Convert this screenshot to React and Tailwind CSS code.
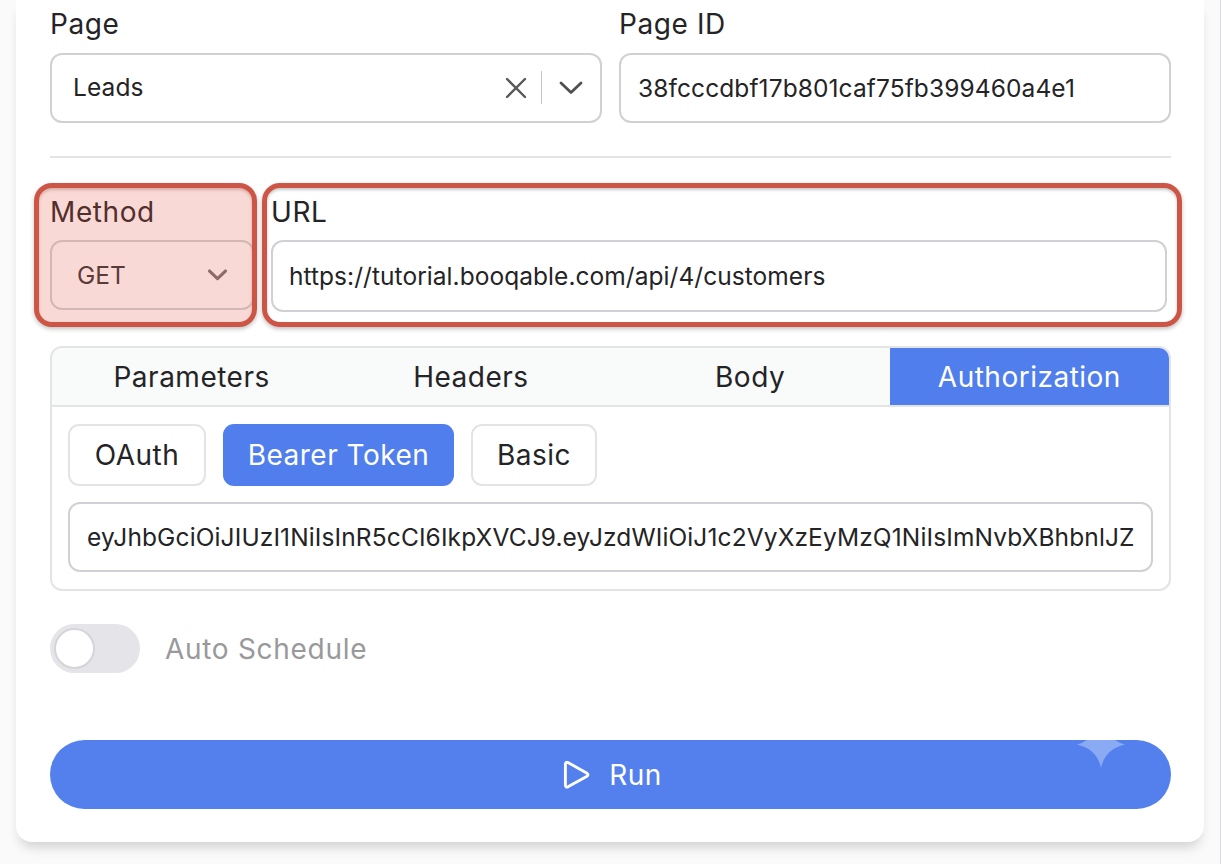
import React from "react";
import { useState } from "react";

const tabs = ["Parameters", "Headers", "Body", "Authorization"];

const authTypes = [
  { name: "OAuth", width: "w-[138px]" },
  { name: "Bearer Token", width: "w-[231px]" },
  { name: "Basic", width: "w-[126px]" },
];

function Label({ children, className = "" }) {
  return (
    <label className={"block text-[28px] leading-[34px] tracking-[0.6px] whitespace-nowrap " + className}>
      {children}
    </label>
  );
}

function Chevron({ className }) {
  return (
    <svg viewBox="0 0 24 14" fill="none" stroke="currentColor" strokeLinecap="round" strokeLinejoin="round" className={className}>
      <path d="M2 2 L12 11.5 L22 2" />
    </svg>
  );
}

export default function RequestForm() {
  const [activeTab, setActiveTab] = useState("Authorization");
  const [authType, setAuthType] = useState("Bearer Token");
  const [pageId, setPageId] = useState("38fcccdbf17b801caf75fb399460a4e1");
  const [url, setUrl] = useState("https://tutorial.booqable.com/api/4/customers");
  const [token, setToken] = useState(
    "eyJhbGciOiJIUzI1NiIsInR5cCI6IkpXVCJ9.eyJzdWIiOiJ1c2VyXzEyMzQ1NiIsImNvbXBhbnlJZ"
  );

  return (
    <div className="h-[864px] w-[1221px] overflow-hidden border-r border-[#dcdcde] bg-[#fafafa] pl-4 font-['Inter',sans-serif] text-[#242426]">
      <div className="flex h-[842px] w-[1188px] flex-col rounded-b-[16px] bg-white pr-[33px] pl-[34px] shadow-[0_9px_12px_-4px_rgba(0,0,0,0.17)]">
        <div className="grid grid-cols-2 gap-[17px] pt-[7px]">
          <div>
            <Label>Page</Label>
            <div className="mt-3 flex h-[70px] items-center rounded-[12px] border-2 border-[#d0d0d5] pb-px pl-[21px] text-[24.5px] tracking-[0.1px]">
              <span className="flex-1">Leads</span>
              <svg viewBox="0 0 22 22" fill="none" stroke="#59595b" strokeWidth="2.4" strokeLinecap="round" className="mr-[14px] size-[22px]">
                <path d="M2 2 L20 20 M20 2 L2 20" />
              </svg>
              <span className="mr-[17px] h-[33px] w-[1.5px] bg-[#c6c6ca]"></span>
              <Chevron className="mr-[17px] h-[14px] w-[24px] stroke-[2.8] text-[#505052]" />
            </div>
          </div>
          <div>
            <Label>Page ID</Label>
            <input
              type="text"
              className="mt-3 block h-[70px] w-full rounded-[12px] border-2 border-[#d0d0d5] px-[17px] pb-px text-[24.5px] tracking-[0.1px] outline-none"
              value={pageId}
              onChange={(e) => setPageId(e.target.value)}
            />
          </div>
        </div>

        <hr className="mt-[33px] border-t-2 border-[#e4e4e7]" />

        <div className="mt-[25px] -mr-[11px] -ml-[16px] flex gap-[5px]">
          <div className="h-[144px] w-[223px] shrink-0 overflow-hidden rounded-[18px] border-[5px] border-[#cc5546] bg-[#f9d9d5] pt-[7px] pl-[11px] shadow-[0_2px_4px_rgba(0,0,0,0.25),inset_0_2px_3px_rgba(120,40,30,0.25)]">
            <Label className="text-[#522f2d]">Method</Label>
            <div className="mt-[11px] flex h-[70px] w-[204px] items-center justify-between rounded-[12px] border-2 border-[#d3b7b5] pr-[25px] pl-[25px] text-[24.5px] text-[#5b3b39]">
              <span>GET</span>
              <Chevron className="h-[12px] w-[19px] stroke-[4] text-[#8c6b69]" />
            </div>
          </div>
          <div className="h-[144px] flex-1 rounded-[18px] border-[5px] border-[#cc5546] pt-[7px] pr-[10px] pl-[4px] shadow-[0_2px_4px_rgba(0,0,0,0.25),inset_0_2px_3px_rgba(0,0,0,0.22)]">
            <Label>URL</Label>
            <input
              type="text"
              className="mt-[11px] block h-[72px] w-full rounded-[12px] border-2 border-[#d0d0d5] px-[16px] text-[24.5px] tracking-[0.05px] outline-none"
              value={url}
              onChange={(e) => setUrl(e.target.value)}
            />
          </div>
        </div>

        <div className="mt-[19px] h-[245px] overflow-hidden rounded-[12px] border-2 border-[#e4e4e7]">
          <div className="grid h-[59px] grid-cols-4 border-b-2 border-[#e4e4e7] bg-[#f9fafa]">
            {tabs.map((tab) => (
              <button
                key={tab}
                onClick={() => setActiveTab(tab)}
                className={
                  "text-[28px] tracking-[0.5px] " +
                  (activeTab === tab ? "bg-[#507eed] text-white" : "")
                }
              >
                {tab}
              </button>
            ))}
          </div>
          <div className="px-4 pt-[17px]">
            <div className="flex gap-[17px]">
              {authTypes.map((type) => (
                <button
                  key={type.name}
                  onClick={() => setAuthType(type.name)}
                  className={
                    "h-[62px] rounded-[11px] text-[28px] tracking-[0.5px] whitespace-nowrap " +
                    type.width +
                    (authType === type.name ? " bg-[#507eed] text-white" : " border-2 border-[#e4e4e7]")
                  }
                >
                  {type.name}
                </button>
              ))}
            </div>
            <input
              type="text"
              className="mt-4 block h-[70px] w-full rounded-[12px] border-2 border-[#d0d0d5] pr-[14px] pl-[17px] text-[24.5px] tracking-[0.12px] outline-none"
              value={token}
              onChange={(e) => setToken(e.target.value)}
            />
          </div>
        </div>

        <div className="mt-[33px] flex h-[49px] items-center gap-[25px]">
          <div className="flex h-[49px] w-[90px] items-center rounded-full bg-[#e4e4e9] pl-[4px]">
            <span className="size-[41px] rounded-full border-2 border-[#d4d4d9] bg-white"></span>
          </div>
          <span className="text-[28px] tracking-[0.7px] text-[#99999c]">Auto Schedule</span>
        </div>

        <button className="relative mt-[67px] flex h-[69px] w-full items-center justify-center gap-[19px] rounded-full bg-[#5380ed] pl-[3px] text-[28px] tracking-[0.5px] text-white">
          <svg viewBox="0 0 28 30" fill="none" stroke="white" strokeWidth="2.9" strokeLinejoin="round" className="h-[30px] w-[28px]">
            <path d="M3.4 4.5 Q3.4 1.2 6.4 2.8 L24.6 13 Q27.4 14.8 24.6 16.6 L6.4 26.6 Q3.4 28 3.4 25 Z" />
          </svg>
          Run
          <svg viewBox="0 0 48 28" fill="#8aabf4" className="absolute top-0 right-[46px] h-[28px] w-[48px]">
            <path d="M10 0 H38 Q42 3 48 4.5 Q28 9 24 28 Q20 9 0 4.5 Q6 3 10 0 Z" />
          </svg>
        </button>
      </div>
    </div>
  );
}
